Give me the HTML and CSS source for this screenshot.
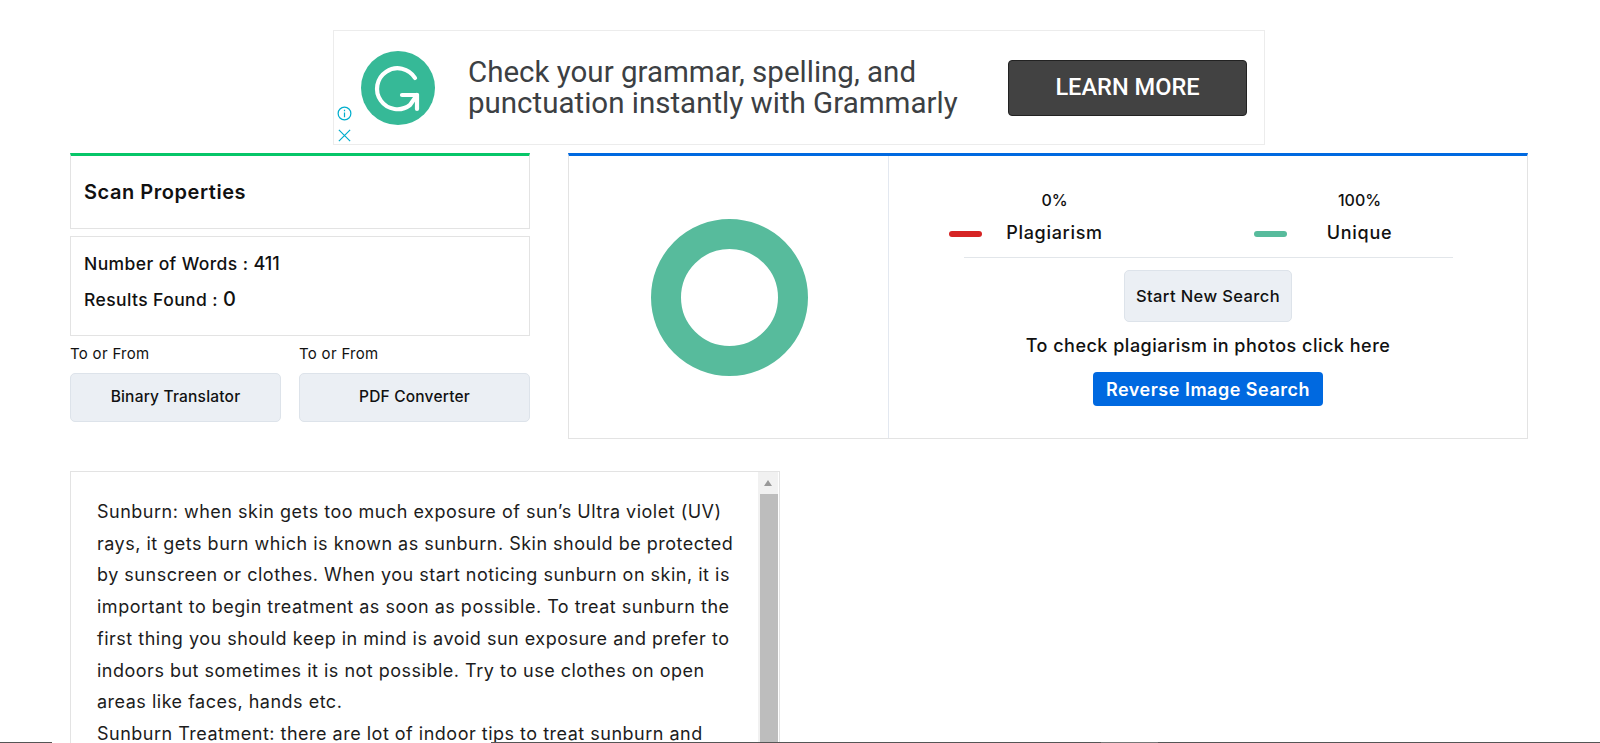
FILE: index.html
```html
<!DOCTYPE html>
<html lang="en">
<head>
<meta charset="utf-8">
<title>Plagiarism Report</title>
<link rel="stylesheet" href="styles.css">
</head>
<body>
<div class="page">
  <div class="ad">
    <div class="ad-marks">
      <svg class="ad-info" viewBox="0 0 16 16"><circle cx="8" cy="8" r="6.8"/><path d="M8 7v5M8 4v1.6"/></svg>
      <svg class="ad-close" viewBox="0 0 16 16"><path d="M2 2l12 12M14 2L2 14"/></svg>
    </div>
    <svg class="ad-logo" viewBox="0 0 74 74"><circle cx="37" cy="37" r="37" fill="#36b997"/><path d="M54 27A20.5 20.5 0 1 0 49 54L56 44"/><path d="M41 44H56V58"/></svg>
    <p class="ad-text">Check your grammar, spelling, and<br>punctuation instantly with Grammarly</p>
    <div class="ad-btn">LEARN MORE</div>
  </div>
  <div class="report">
    <div class="left">
      <div class="box box-head"><h2 class="scan-title">Scan Properties</h2></div>
      <div class="box box-stats">
        <p class="stat">Number of Words : <b class="num">411</b></p>
        <p class="stat">Results Found : <b class="num big">0</b></p>
      </div>
      <div class="links">
        <div class="link link-a"><span class="link-label">To or From</span><a class="tool">Binary Translator</a></div>
        <div class="link link-b"><span class="link-label">To or From</span><a class="tool">PDF Converter</a></div>
      </div>
    </div>
    <div class="right">
      <div class="chart-cell"><div class="ring"></div></div>
      <div class="info-cell">
        <div class="legend">
          <div class="legend-item"><span class="bar bar-red"></span><div class="legend-text"><span class="pct">0%</span><span class="name">Plagiarism</span></div></div>
          <div class="legend-item"><span class="bar bar-green"></span><div class="legend-text"><span class="pct">100%</span><span class="name">Unique</span></div></div>
        </div>
        <div class="rule"></div>
        <a class="new-search">Start New Search</a>
        <p class="photo-note">To check plagiarism in photos click here</p>
        <a class="reverse">Reverse Image Search</a>
      </div>
    </div>
  </div>
  <div class="content-box">
    <div class="content-text">
      <p>Sunburn: when skin gets too much exposure of sun’s Ultra violet (UV)<br>rays, it gets burn which is known as sunburn. Skin should be protected<br>by sunscreen or clothes. When you start noticing sunburn on skin, it is<br>important to begin treatment as soon as possible. To treat sunburn the<br>first thing you should keep in mind is avoid sun exposure and prefer to<br>indoors but sometimes it is not possible. Try to use clothes on open<br>areas like faces, hands etc.<br>Sunburn Treatment: there are lot of indoor tips to treat sunburn and</p>
    </div>
    <div class="scrollbar"><div class="scroll-up"><span class="arrow"></span></div><div class="thumb"></div></div>
  </div>
</div>
<div class="edge"><span class="edge-a"></span><span class="edge-gap"></span><span class="edge-b"></span><span class="edge-c"></span><span class="edge-d"></span></div>
</body>
</html>
```
FILE: styles.css
```css
* { box-sizing: border-box; }
html, body { margin: 0; height: 743px; overflow: hidden; background: #fff; }
body { font-family: Inter, "Liberation Sans", sans-serif; color: #111; position: relative; }
p, h2 { margin: 0; }
.page { padding: 30px 73px 0 70px; height: 743px; overflow: hidden; }

.ad { width: 932px; height: 115px; margin-left: 263px; border: 1px solid #ececec; display: flex; align-items: center; position: relative; }
.ad-marks { position: absolute; left: 3px; bottom: 1px; display: flex; flex-direction: column; gap: 5px; }
.ad-info, .ad-close { width: 15px; height: 15px; fill: none; stroke: #00aecd; stroke-width: 1.3; }
.ad-info { margin-bottom: 2px; }
.ad-logo { width: 74px; height: 74px; margin-left: 27px; flex: none; fill: none; }
.ad-logo path { fill: none; stroke: #fff; stroke-width: 4.2; stroke-linecap: round; stroke-linejoin: round; }
.ad-text { margin-left: 33px; font-family: Roboto, sans-serif; font-size: 29.5px; line-height: 31px; color: #3c4043; white-space: nowrap; }
.ad-btn { margin-left: auto; margin-right: 17px; width: 239px; height: 56px; padding-bottom: 2px; flex: none; background: #424242; border: 1px solid #222; border-radius: 4px; color: #fff; font-family: Roboto, sans-serif; font-weight: 500; font-size: 23.6px; display: flex; align-items: center; justify-content: center; }

.report { display: flex; gap: 38px; margin-top: 8px; }
.left { width: 460px; flex: none; }
.box { border: 1px solid #e3e3e3; }
.box-head { height: 76px; border-top: 3px solid #06c668; padding-left: 13px; display: flex; align-items: center; }
.scan-title { font-size: 20px; font-weight: 600; letter-spacing: .55px; }
.box-stats { height: 100px; margin-top: 7px; padding: 13px 13px 0; }
.stat { font-size: 17.5px; font-weight: 500; line-height: 27px; margin-bottom: 9px; letter-spacing: .4px; }
.num { font-size: 18px; font-weight: 500; letter-spacing: 0; }
.big { font-size: 20px; }
.links { display: flex; justify-content: space-between; margin-top: 8px; }
.link { display: flex; flex-direction: column; }
.link-a { width: 211px; }
.link-b { width: 231px; }
.link-label { font-size: 15px; line-height: 20px; letter-spacing: .3px; }
.tool { margin-top: 9px; height: 49px; padding-bottom: 3px; background: #ebeff4; border: 1px solid #dde3ea; border-radius: 5px; font-size: 15.5px; font-weight: 500; letter-spacing: .2px; display: flex; align-items: center; justify-content: center; }

.right { width: 960px; height: 286px; flex: none; border: 1px solid #e3e3e3; border-top: 3px solid #0069e0; display: flex; }
.chart-cell { width: 320px; flex: none; padding: 1px 0 0 2px; border-right: 1px solid #e3e8f0; display: flex; align-items: center; justify-content: center; }
.ring { width: 157px; height: 157px; border-radius: 50%; border: 30px solid #57bb9c; }
.info-cell { flex: 1; min-width: 0; display: flex; flex-direction: column; align-items: center; }
.legend { width: 100%; display: flex; gap: 140px; padding: 33px 0 0 60px; height: 100px; flex: none; }
.legend-item { display: flex; align-items: center; height: 64px; flex: none; }
.bar { width: 33px; height: 6px; border-radius: 3px; margin-top: 26px; flex: none; }
.bar-red { background: #d62424; }
.bar-green { background: #57bb9c; }
.legend-text { width: 119px; margin-left: 13px; display: flex; flex-direction: column; align-items: center; font-weight: 500; }
.pct { font-size: 16px; line-height: 24px; }
.name { font-size: 18px; line-height: 42px; letter-spacing: .7px; }
.rule { width: 489px; height: 1px; background: #e2e6ea; margin-top: 1px; flex: none; }
.new-search { margin-top: 12px; width: 168px; height: 52px; flex: none; background: #ebeff4; border: 1px solid #dde3ea; border-radius: 5px; font-size: 16.5px; font-weight: 500; letter-spacing: .4px; display: flex; align-items: center; justify-content: center; }
.photo-note { margin-top: 12px; font-size: 18px; line-height: 24px; font-weight: 500; letter-spacing: .5px; white-space: nowrap; }
.reverse { margin-top: 14px; width: 230px; height: 34px; flex: none; background: #0069e0; border-radius: 4px; color: #fff; font-size: 18px; font-weight: 600; letter-spacing: .5px; display: flex; align-items: center; justify-content: center; white-space: nowrap; }

.content-box { width: 710px; height: 300px; margin-top: 32px; border: 1px solid #e3e3e3; border-bottom: 0; display: flex; overflow: hidden; }
.content-text { flex: 1; min-width: 0; padding: 24px 0 0 26px; font-size: 18px; letter-spacing: .5px; line-height: 31.7px; white-space: nowrap; color: #1c1c1c; }
.scrollbar { width: 20px; flex: none; margin-right: 1px; background: #f1f1f1; }
.scroll-up { height: 22px; display: flex; align-items: center; justify-content: center; }
.arrow { width: 0; height: 0; border: 4.5px solid transparent; border-top: 0; border-bottom: 6px solid #999; }
.thumb { width: 18px; margin-left: 2px; height: 280px; background: #bdbdbd; }

.edge { position: absolute; left: 0; right: 0; bottom: 0; height: 1px; display: flex; }
.edge-a { width: 52px; background: #555; }
.edge-gap { width: 439px; }
.edge-b { width: 610px; background: #555; }
.edge-c { width: 57px; background: #777; }
.edge-d { flex: 1; background: #555; }
```
